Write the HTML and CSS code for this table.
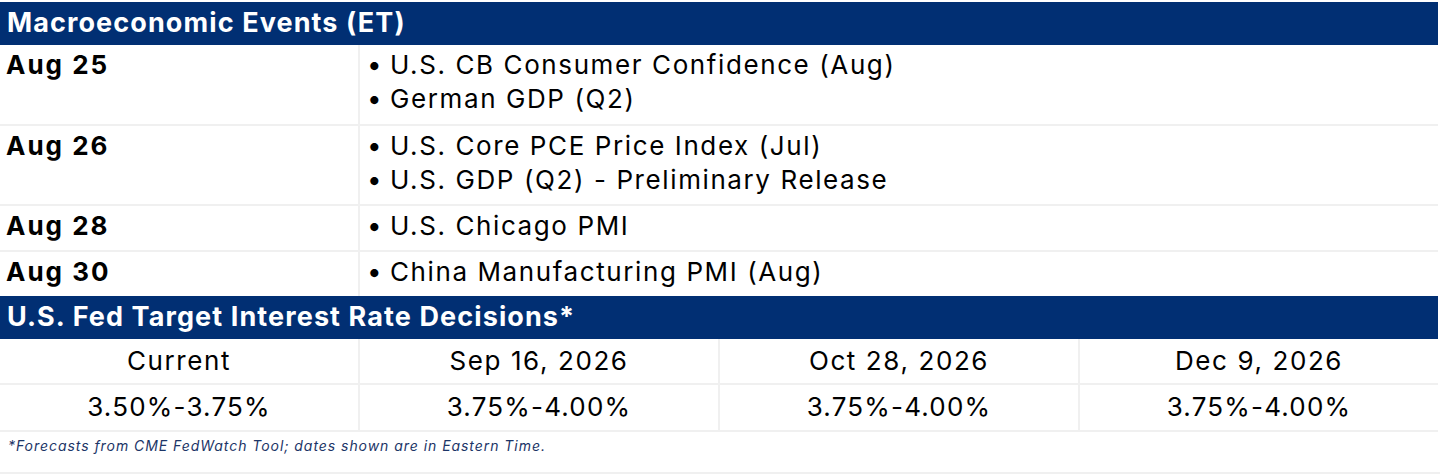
FILE: index.html
```html
<!DOCTYPE html>
<html lang="en">
<head>
<meta charset="utf-8">
<title>Macroeconomic Events</title>
<link rel="stylesheet" href="styles.css">
</head>
<body>
<div class="sheet">
  <div class="band">Macroeconomic Events (ET)</div>
  <div class="events">
    <div class="date">Aug 25</div>
    <div class="items">
      <div class="item"><span class="dot">•</span>U.S. CB Consumer Confidence (Aug)</div>
      <div class="item"><span class="dot">•</span>German GDP (Q2)</div>
    </div>
    <div class="date">Aug 26</div>
    <div class="items">
      <div class="item"><span class="dot">•</span>U.S. Core PCE Price Index (Jul)</div>
      <div class="item"><span class="dot">•</span>U.S. GDP (Q2) - Preliminary Release</div>
    </div>
    <div class="date">Aug 28</div>
    <div class="items">
      <div class="item"><span class="dot">•</span>U.S. Chicago PMI</div>
    </div>
    <div class="date">Aug 30</div>
    <div class="items">
      <div class="item"><span class="dot">•</span>China Manufacturing PMI (Aug)</div>
    </div>
  </div>
  <div class="band">U.S. Fed Target Interest Rate Decisions*</div>
  <div class="rates">
    <div class="cell">Current</div>
    <div class="cell">Sep 16, 2026</div>
    <div class="cell">Oct 28, 2026</div>
    <div class="cell">Dec 9, 2026</div>
    <div class="cell value">3.50%-3.75%</div>
    <div class="cell value">3.75%-4.00%</div>
    <div class="cell value">3.75%-4.00%</div>
    <div class="cell value">3.75%-4.00%</div>
  </div>
  <div class="note">*Forecasts from CME FedWatch Tool; dates shown are in Eastern Time.</div>
</div>
</body>
</html>
```

FILE: styles.css
```css
html, body {
  margin: 0;
  padding: 0;
  background: #ffffff;
}
body {
  font-family: Inter, "Noto Sans", "Liberation Sans", sans-serif;
  color: #000000;
}
.sheet {
  width: 1438px;
  padding-top: 2px;
}
.band {
  background: #012f73;
  color: #ffffff;
  font-weight: 700;
  font-size: 27px;
  letter-spacing: 1.1px;
  line-height: 42px;
  height: 43px;
  padding-left: 7px;
  white-space: nowrap;
}
.events {
  display: grid;
  grid-template-columns: 358px 1fr;
  grid-template-rows: 79px 78px 44px 44px;
  gap: 2px;
  background: #f0f0f0;
}
.date {
  background: #ffffff;
  font-weight: 700;
  font-size: 26px;
  letter-spacing: 2px;
  line-height: 34px;
  padding: 3px 6px 0;
}
.items {
  background: #ffffff;
  font-size: 26px;
  letter-spacing: 1.6px;
  line-height: 34px;
  padding: 3px 7px 0;
}
.item {
  display: flex;
  white-space: nowrap;
}
.dot {
  width: 23px;
  flex: none;
}
.rates {
  display: grid;
  grid-template-columns: repeat(4, 1fr);
  grid-template-rows: 44px 45px;
  gap: 2px;
  background: #f0f0f0;
  border-bottom: 2px solid #f0f0f0;
}
.cell {
  background: #ffffff;
  text-align: center;
  font-size: 26px;
  letter-spacing: 1.6px;
  line-height: 44px;
}
.cell.value {
  letter-spacing: 1.2px;
}
.note {
  width: 1432px;
  height: 40px;
  padding-left: 8px;
  border-right: 2px solid #f0f0f0;
  border-bottom: 2px solid #f0f0f0;
  font-style: italic;
  font-size: 14px;
  letter-spacing: 0.95px;
  line-height: 28px;
  color: #1c3567;
}
```
